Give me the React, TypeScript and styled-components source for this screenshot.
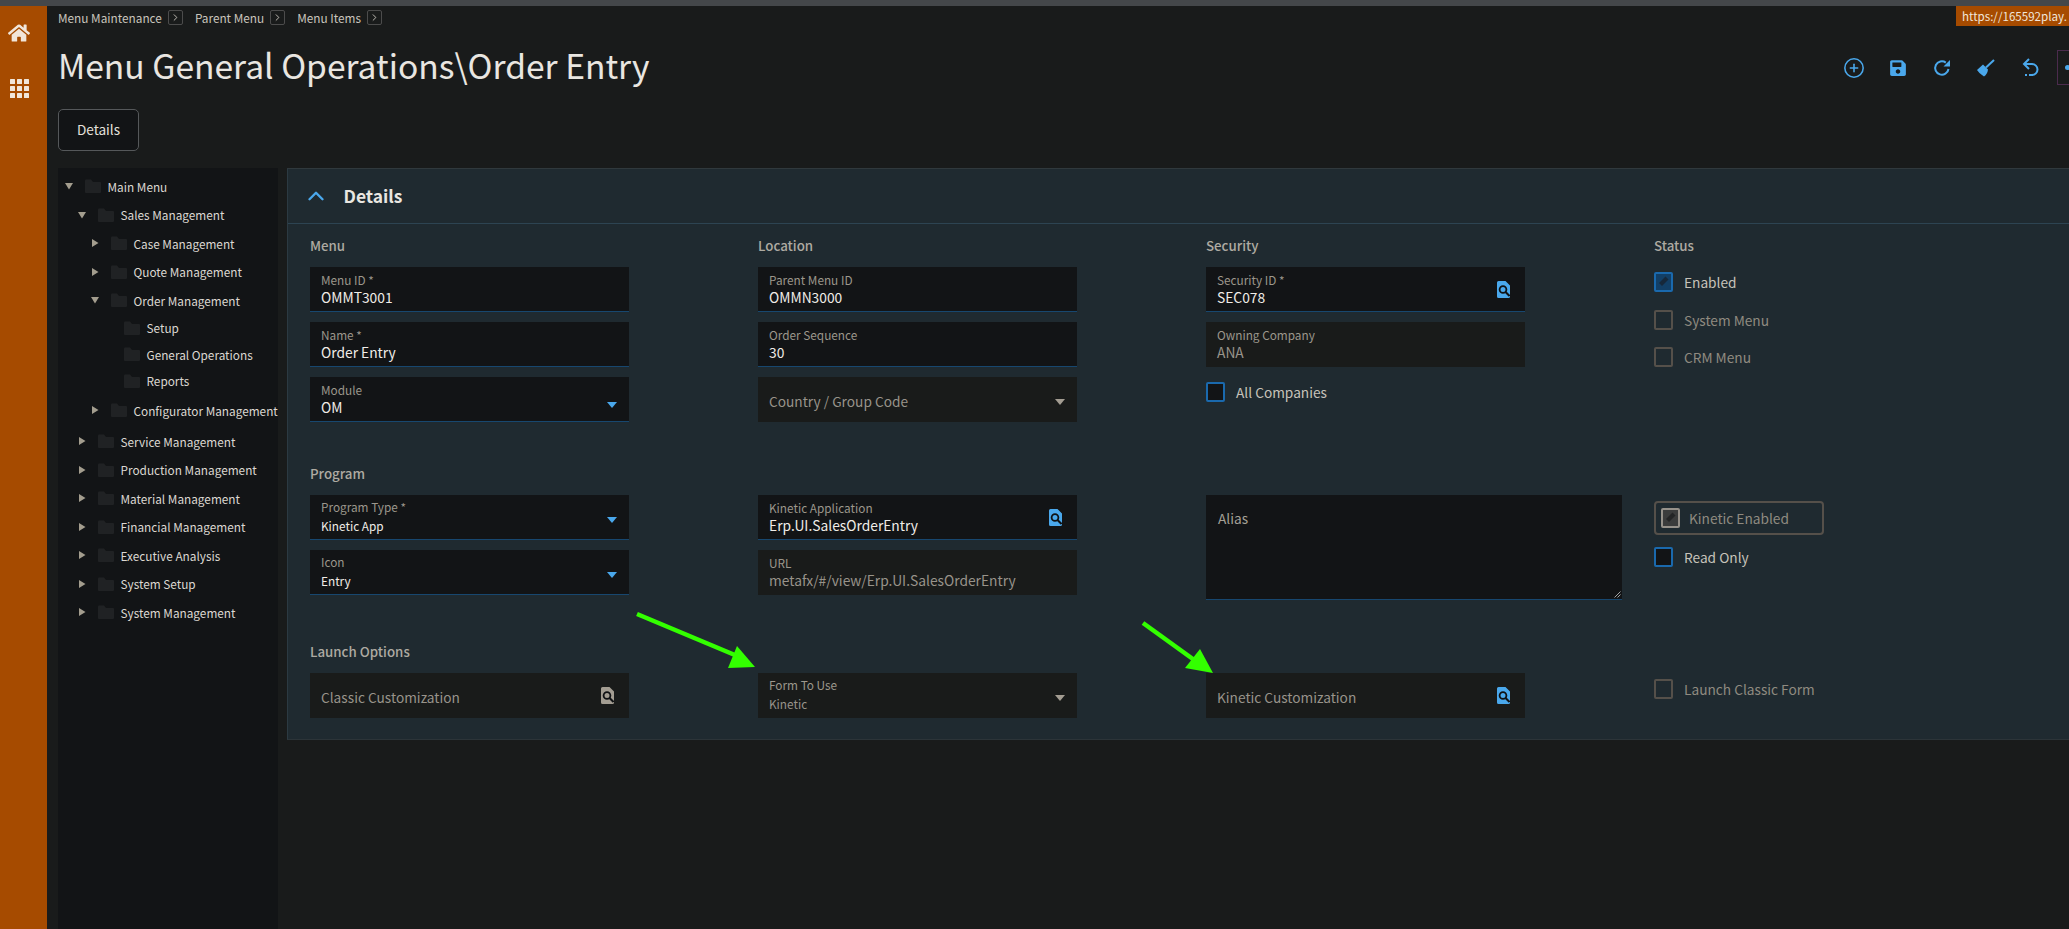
import React from "react";
import styled, { createGlobalStyle } from "styled-components";
import { FaHome, FaSave } from "react-icons/fa";
import { CirclePlus, ChevronRight, ChevronUp } from "lucide-react";

const BLUE = "#4aa8ec";
const FONT = '"Noto Sans CJK SC", "Noto Sans", sans-serif';

const GlobalStyle = createGlobalStyle`
  html, body {
    margin: 0;
    width: 2069px;
    height: 929px;
    overflow: hidden;
    background: #191b1b;
    font-family: ${FONT};
  }
`;

const Page = styled.div`
  position: relative;
  width: 2069px;
  height: 929px;
  overflow: hidden;
  display: flex;
  flex-direction: column;
`;

const TopStrip = styled.div`
  height: 6px;
  flex: none;
  background: #44474a;
`;

const Shell = styled.div`
  flex: 1;
  display: flex;
  min-height: 0;
`;

const SideBar = styled.nav`
  width: 47px;
  box-sizing: border-box;
  flex: none;
  background: #a64b00;
  color: #f1e6da;
  display: flex;
  flex-direction: column;
  align-items: center;
  padding: 16px 9px 0 0;
  gap: 35px;
`;

const Main = styled.main`
  flex: 1;
  min-width: 0;
  padding-left: 11px;
  display: flex;
  flex-direction: column;
`;

const Crumbs = styled.div`
  display: flex;
  align-items: center;
  height: 15px;
  margin-top: 4px;
`;

const Crumb = styled.span`
  color: #c9c5bd;
  font-size: 11.8px;
  line-height: 15px;
  margin-right: 6px;
`;

const CrumbBox = styled.span`
  width: 15px;
  height: 15px;
  box-sizing: border-box;
  border: 1px solid #4c4c4c;
  border-radius: 2px;
  color: #c9c5bd;
  display: flex;
  align-items: center;
  justify-content: center;
  margin-right: 12px;
`;

const TitleRow = styled.div`
  display: flex;
  align-items: center;
  height: 35px;
  margin-top: 25px;
`;

const Title = styled.h1`
  margin: 0 0 6px;
  color: #e9e6e1;
  font-size: 33.6px;
  font-weight: 400;
  line-height: 35px;
  white-space: nowrap;
`;

const ToolBar = styled.div`
  margin-left: auto;
  margin-right: -18px;
  display: flex;
  align-items: center;
  color: ${BLUE};
`;

const ToolCell = styled.span`
  width: 44px;
  display: flex;
  align-items: center;
  justify-content: center;
`;

const MoreBox = styled.span`
  width: 30px;
  height: 35px;
  box-sizing: border-box;
  margin-left: 5px;
  border: 1px solid #4b2b4d;
  display: flex;
  align-items: center;
  padding-left: 7px;
`;

const MoreDot = styled.span`
  width: 5px;
  height: 5px;
  border-radius: 50%;
  background: ${BLUE};
`;

const TabButton = styled.button`
  align-self: flex-start;
  width: 81px;
  height: 42px;
  margin-top: 24px;
  padding: 0 0 2px;
  background: #121416;
  border: 1px solid #55585a;
  border-radius: 5px;
  color: #e4e1dc;
  font-family: ${FONT};
  font-size: 13.6px;
`;

const Content = styled.div`
  flex: 1;
  display: flex;
  gap: 9px;
  margin-top: 17px;
  min-height: 0;
`;

const Tree = styled.ul`
  width: 220px;
  flex: none;
  margin: 0;
  padding: 4px 0 0;
  list-style: none;
  background: #121416;
  overflow: hidden;
`;

const TreeRow = styled.li<{ $depth: number; $compact?: boolean; $extra?: number }>`
  height: ${(p) => (p.$compact ? 26.5 : 28.5)}px;
  margin-top: ${(p) => p.$extra ?? 0}px;
  padding-left: ${(p) => 6 + p.$depth * 13}px;
  display: flex;
  align-items: center;
  white-space: nowrap;
  color: #dcd8d2;
  font-size: 11.8px;
`;

const Twist = styled.span`
  width: 10px;
  height: 10px;
  flex: none;
  margin-right: 11px;
  display: flex;
  align-items: center;
  justify-content: center;
`;

const FolderIcon = styled.svg`
  width: 16px;
  height: 14px;
  flex: none;
  margin-right: 6.5px;
`;

const Panel = styled.section`
  flex: 1;
  align-self: flex-start;
  background: #1f2a30;
  border-top: 1px solid #30393d;
  border-bottom: 1px solid #2c3438;
  border-left: 1px solid #2c3a42;
`;

const PanelHeader = styled.header`
  height: 54px;
  display: flex;
  align-items: center;
  padding-left: 15px;
  border-bottom: 1px solid #2d4452;
  color: ${BLUE};
`;

const PanelTitle = styled.h2`
  margin: 0 0 1px 14.5px;
  color: #e9e6e1;
  font-size: 17.4px;
  font-weight: 600;
  line-height: 24px;
`;

const PanelBody = styled.div`
  padding: 12px 0 21px 22px;
  display: flex;
  flex-direction: column;
  gap: 42px;
`;

const FormRow = styled.div`
  display: grid;
  grid-template-columns: repeat(4, 319px);
  column-gap: 129px;
`;

const Col = styled.div`
  display: flex;
  flex-direction: column;
  gap: 10px;
`;

const Heading = styled.h3`
  margin: 0;
  height: 21px;
  color: #aeaaa2;
  font-size: 13.3px;
  font-weight: 500;
  line-height: 20px;
`;

const Field = styled.div<{ $off?: boolean }>`
  height: 45px;
  box-sizing: border-box;
  padding: 0 15px 0 11px;
  background: ${(p) => (p.$off ? "#191b1a" : "#121416")};
  border-bottom: 1px solid ${(p) => (p.$off ? "#191b1a" : "#17476f")};
  display: flex;
  align-items: center;
`;

const FieldText = styled.div`
  flex: 1;
  min-width: 0;
  display: flex;
  flex-direction: column;
  white-space: nowrap;
`;

const FieldLabel = styled.span`
  color: #9c978c;
  font-size: 11.8px;
  line-height: 16px;
`;

const FieldValue = styled.span<{ $off?: boolean; $small?: boolean }>`
  color: ${(p) => (p.$off ? "#98938a" : "#f0ede8")};
  font-size: ${(p) => (p.$small ? 11.8 : 13.8)}px;
  line-height: ${(p) => (p.$small ? 20 : 18)}px;
  margin-top: ${(p) => (p.$small ? 1 : 0)}px;
`;

const Placeholder = styled.span`
  color: #98938a;
  font-size: 13.7px;
  line-height: 20px;
  margin-top: 3px;
`;

const Caret = styled.span<{ $off?: boolean; $drop?: number }>`
  width: 0;
  height: 0;
  flex: none;
  margin-top: ${(p) => p.$drop ?? 5}px;
  margin-right: -3px;
  border-left: 5.5px solid transparent;
  border-right: 5.5px solid transparent;
  border-top: 6.5px solid ${(p) => (p.$off ? "#a39d92" : BLUE)};
`;

const AliasBox = styled.div`
  width: 416px;
  height: 105px;
  box-sizing: border-box;
  position: relative;
  padding: 13px 12px;
  background: #121416;
  border-bottom: 1px solid #17476f;
  color: #a5a096;
  font-size: 13.7px;
  line-height: 20px;
`;

const ResizeGrip = styled.svg`
  position: absolute;
  right: 1px;
  bottom: 1px;
  width: 7px;
  height: 7px;
`;

const CheckStack = styled.div`
  display: flex;
  flex-direction: column;
  gap: 17.5px;
  padding-top: 5px;
`;

const CheckRow = styled.div<{ $off?: boolean; $top?: number }>`
  display: flex;
  align-items: center;
  gap: 11px;
  height: 20px;
  margin-top: ${(p) => p.$top ?? 0}px;
  color: ${(p) => (p.$off ? "#8f8a80" : "#c6c2ba")};
  font-size: 13.7px;
  line-height: 18px;
  white-space: nowrap;
`;

const Box = styled.span<{ $tone: "blue" | "on" | "off" | "grey" }>`
  width: 19px;
  height: 20px;
  box-sizing: border-box;
  flex: none;
  border-radius: 2px;
  border: 2px solid
    ${(p) =>
      p.$tone === "off" ? "#55504a" : p.$tone === "grey" ? "#96918a" : "#1a69ad"};
  background: ${(p) =>
    p.$tone === "off"
      ? "transparent"
      : p.$tone === "on"
        ? "#123f66"
        : p.$tone === "grey"
          ? "#3b3c3c"
          : "#121416"};
  display: flex;
  align-items: center;
  justify-content: center;
`;

const BoxedCheck = styled.div`
  width: 170px;
  height: 34px;
  box-sizing: border-box;
  margin-top: 6px;
  padding-left: 5px;
  border: 2px solid #55504a;
  border-radius: 4px;
  display: flex;
  align-items: center;
  gap: 9px;
  color: #8f8a80;
  font-size: 13.7px;
`;

const UrlBadge = styled.div`
  position: absolute;
  top: 6px;
  right: 0;
  width: 113px;
  height: 20px;
  box-sizing: border-box;
  padding-left: 6px;
  overflow: hidden;
  background: #a64b00;
  color: #f1e6da;
  font-size: 11.6px;
  line-height: 20px;
  white-space: nowrap;
`;

const Annotations = styled.svg`
  position: absolute;
  left: 0;
  top: 0;
  pointer-events: none;
`;

function Lookup({ color = BLUE }: { color?: string }) {
  return (
    <svg width="13" height="17" viewBox="0 0 13 17">
      <path
        d="M1.5 0H8.5L13 4.5V15.5A1.5 1.5 0 0 1 11.5 17H1.5A1.5 1.5 0 0 1 0 15.5V1.5A1.5 1.5 0 0 1 1.5 0Z"
        fill={color}
      />
      <circle cx="6" cy="8.5" r="3.4" fill="none" stroke="#101214" strokeWidth="1.8" />
      <path d="M8.5 11L12.5 15" stroke="#101214" strokeWidth="2" />
    </svg>
  );
}

function GridIcon() {
  const cells = [0, 7, 14];
  return (
    <svg width="19" height="19" viewBox="0 0 19 19" fill="currentColor">
      {cells.map((y) =>
        cells.map((x) => <rect key={`${x}-${y}`} x={x} y={y} width="5" height="5" rx="0.5" />)
      )}
    </svg>
  );
}

function RefreshIcon() {
  return (
    <svg width="18" height="18" viewBox="0 0 18 18" fill="none">
      <path d="M15.5 10A6.7 6.7 0 1 1 12.8 3.6" stroke={BLUE} strokeWidth="2" />
      <path d="M17 1V7.5H10.5Z" fill={BLUE} />
    </svg>
  );
}

function BroomIcon() {
  return (
    <svg width="18" height="18" viewBox="0 0 18 18">
      <path d="M17 1L9 8.5" stroke={BLUE} strokeWidth="2" />
      <path d="M0 11L6 5.5L11 10.5Q10.5 15 7 17.5L5 16Q2 14 0 11Z" fill={BLUE} />
    </svg>
  );
}

function UndoIcon() {
  return (
    <svg width="17" height="20" viewBox="0 0 17 20" fill="none" stroke={BLUE} strokeWidth="2">
      <path d="M7 1L2 6L7 11" />
      <path d="M2 6H10A5.5 5.5 0 0 1 10 17H7" />
      <path d="M3 17H5" />
    </svg>
  );
}

function Mark({ dark }: { dark: string }) {
  return (
    <svg width="11" height="12" viewBox="0 0 11 12">
      <path d="M7.5 0.5L10.5 3.5L4 10L1 7Z" fill={dark} />
    </svg>
  );
}

const Triangle = ({ open }: { open: boolean }) => (
  <svg width="10" height="10" viewBox="0 0 10 10">
    <path d={open ? "M1 2H9L5 8.5Z" : "M2 1V9L8.5 5Z"} fill="#a39d8e" />
  </svg>
);

const treeRows: { name: string; depth: number; open?: boolean; leaf?: boolean; extra?: number }[] = [
  { name: "Main Menu", depth: 0, open: true },
  { name: "Sales Management", depth: 1, open: true },
  { name: "Case Management", depth: 2 },
  { name: "Quote Management", depth: 2 },
  { name: "Order Management", depth: 2, open: true },
  { name: "Setup", depth: 3, leaf: true },
  { name: "General Operations", depth: 3, leaf: true },
  { name: "Reports", depth: 3, leaf: true },
  { name: "Configurator Management", depth: 2, extra: 2 },
  { name: "Service Management", depth: 1, extra: 2.5 },
  { name: "Production Management", depth: 1 },
  { name: "Material Management", depth: 1 },
  { name: "Financial Management", depth: 1 },
  { name: "Executive Analysis", depth: 1 },
  { name: "System Setup", depth: 1 },
  { name: "System Management", depth: 1 },
];

export default function App() {
  return (
    <Page>
      <GlobalStyle />
      <TopStrip />
      <Shell>
        <SideBar>
          <FaHome size={22} />
          <GridIcon />
        </SideBar>
        <Main>
          <Crumbs>
            {["Menu Maintenance", "Parent Menu", "Menu Items"].map((c) => (
              <React.Fragment key={c}>
                <Crumb>{c}</Crumb>
                <CrumbBox>
                  <ChevronRight size={11} />
                </CrumbBox>
              </React.Fragment>
            ))}
          </Crumbs>
          <TitleRow>
            <Title>Menu General Operations\Order Entry</Title>
            <ToolBar>
              <ToolCell>
                <CirclePlus size={22} strokeWidth={1.7} />
              </ToolCell>
              <ToolCell>
                <FaSave size={18} />
              </ToolCell>
              <ToolCell>
                <RefreshIcon />
              </ToolCell>
              <ToolCell>
                <BroomIcon />
              </ToolCell>
              <ToolCell>
                <UndoIcon />
              </ToolCell>
              <MoreBox>
                <MoreDot />
              </MoreBox>
            </ToolBar>
          </TitleRow>
          <TabButton>Details</TabButton>
          <Content>
            <Tree>
              {treeRows.map((r) => (
                <TreeRow key={r.name} $depth={r.depth} $compact={r.leaf} $extra={r.extra}>
                  <Twist>{!r.leaf && <Triangle open={!!r.open} />}</Twist>
                  <FolderIcon viewBox="0 0 16 14">
                    <path d="M0 1.5A1 1 0 0 1 1 0.5H6L8 3H15A1 1 0 0 1 16 4V13A1 1 0 0 1 15 14H1A1 1 0 0 1 0 13Z" fill="#202224" />
                  </FolderIcon>
                  {r.name}
                </TreeRow>
              ))}
            </Tree>
            <Panel>
              <PanelHeader>
                <ChevronUp size={26} strokeWidth={2.2} />
                <PanelTitle>Details</PanelTitle>
              </PanelHeader>
              <PanelBody>
                <FormRow>
                  <Col>
                    <Heading>Menu</Heading>
                    <Field>
                      <FieldText>
                        <FieldLabel>Menu ID *</FieldLabel>
                        <FieldValue>OMMT3001</FieldValue>
                      </FieldText>
                    </Field>
                    <Field>
                      <FieldText>
                        <FieldLabel>Name *</FieldLabel>
                        <FieldValue>Order Entry</FieldValue>
                      </FieldText>
                    </Field>
                    <Field>
                      <FieldText>
                        <FieldLabel>Module</FieldLabel>
                        <FieldValue>OM</FieldValue>
                      </FieldText>
                      <Caret $drop={11} />
                    </Field>
                  </Col>
                  <Col>
                    <Heading>Location</Heading>
                    <Field>
                      <FieldText>
                        <FieldLabel>Parent Menu ID</FieldLabel>
                        <FieldValue>OMMN3000</FieldValue>
                      </FieldText>
                    </Field>
                    <Field>
                      <FieldText>
                        <FieldLabel>Order Sequence</FieldLabel>
                        <FieldValue>30</FieldValue>
                      </FieldText>
                    </Field>
                    <Field $off>
                      <FieldText>
                        <Placeholder>Country / Group Code</Placeholder>
                      </FieldText>
                      <Caret $off />
                    </Field>
                  </Col>
                  <Col>
                    <Heading>Security</Heading>
                    <Field>
                      <FieldText>
                        <FieldLabel>Security ID *</FieldLabel>
                        <FieldValue>SEC078</FieldValue>
                      </FieldText>
                      <Lookup />
                    </Field>
                    <Field $off>
                      <FieldText>
                        <FieldLabel>Owning Company</FieldLabel>
                        <FieldValue $off>ANA</FieldValue>
                      </FieldText>
                    </Field>
                    <CheckRow $top={5}>
                      <Box $tone="blue" />
                      All Companies
                    </CheckRow>
                  </Col>
                  <Col>
                    <Heading>Status</Heading>
                    <CheckStack>
                      <CheckRow>
                        <Box $tone="on">
                          <Mark dark="#16283a" />
                        </Box>
                        Enabled
                      </CheckRow>
                      <CheckRow $off>
                        <Box $tone="off" />
                        System Menu
                      </CheckRow>
                      <CheckRow $off>
                        <Box $tone="off" />
                        CRM Menu
                      </CheckRow>
                    </CheckStack>
                  </Col>
                </FormRow>
                <FormRow>
                  <Col>
                    <Heading>Program</Heading>
                    <Field>
                      <FieldText>
                        <FieldLabel>Program Type *</FieldLabel>
                        <FieldValue $small>Kinetic App</FieldValue>
                      </FieldText>
                      <Caret />
                    </Field>
                    <Field>
                      <FieldText>
                        <FieldLabel>Icon</FieldLabel>
                        <FieldValue $small>Entry</FieldValue>
                      </FieldText>
                      <Caret />
                    </Field>
                  </Col>
                  <Col>
                    <Heading />
                    <Field>
                      <FieldText>
                        <FieldLabel>Kinetic Application</FieldLabel>
                        <FieldValue>Erp.UI.SalesOrderEntry</FieldValue>
                      </FieldText>
                      <Lookup />
                    </Field>
                    <Field $off>
                      <FieldText>
                        <FieldLabel>URL</FieldLabel>
                        <FieldValue $off>metafx/#/view/Erp.UI.SalesOrderEntry</FieldValue>
                      </FieldText>
                    </Field>
                  </Col>
                  <Col>
                    <Heading />
                    <AliasBox>
                      Alias
                      <ResizeGrip viewBox="0 0 7 7">
                        <path d="M0.5 6.5L6.5 0.5M3.5 6.5L6.5 3.5" stroke="#c8c8c8" strokeWidth="0.8" />
                      </ResizeGrip>
                    </AliasBox>
                  </Col>
                  <Col>
                    <Heading />
                    <BoxedCheck>
                      <Box $tone="grey">
                        <Mark dark="#242526" />
                      </Box>
                      Kinetic Enabled
                    </BoxedCheck>
                    <CheckRow $top={2}>
                      <Box $tone="blue" />
                      Read Only
                    </CheckRow>
                  </Col>
                </FormRow>
                <FormRow>
                  <Col>
                    <Heading>Launch Options</Heading>
                    <Field $off>
                      <FieldText>
                        <Placeholder>Classic Customization</Placeholder>
                      </FieldText>
                      <Lookup color="#a39d92" />
                    </Field>
                  </Col>
                  <Col>
                    <Heading />
                    <Field $off>
                      <FieldText>
                        <FieldLabel>Form To Use</FieldLabel>
                        <FieldValue $off $small>Kinetic</FieldValue>
                      </FieldText>
                      <Caret $off />
                    </Field>
                  </Col>
                  <Col>
                    <Heading />
                    <Field $off>
                      <FieldText>
                        <Placeholder>Kinetic Customization</Placeholder>
                      </FieldText>
                      <Lookup />
                    </Field>
                  </Col>
                  <Col>
                    <Heading />
                    <CheckRow $off $top={6}>
                      <Box $tone="off" />
                      Launch Classic Form
                    </CheckRow>
                  </Col>
                </FormRow>
              </PanelBody>
            </Panel>
          </Content>
        </Main>
      </Shell>
      <UrlBadge>https://165592play.</UrlBadge>
      <Annotations width="2069" height="929" viewBox="0 0 2069 929">
        <path d="M637 614L742 658" stroke="#33ff00" strokeWidth="4.5" />
        <path d="M737 646L728 668L755 667Z" fill="#33ff00" />
        <path d="M1143 623L1197 662" stroke="#33ff00" strokeWidth="4.5" />
        <path d="M1200 649L1185 668L1213 673Z" fill="#33ff00" />
      </Annotations>
    </Page>
  );
}
